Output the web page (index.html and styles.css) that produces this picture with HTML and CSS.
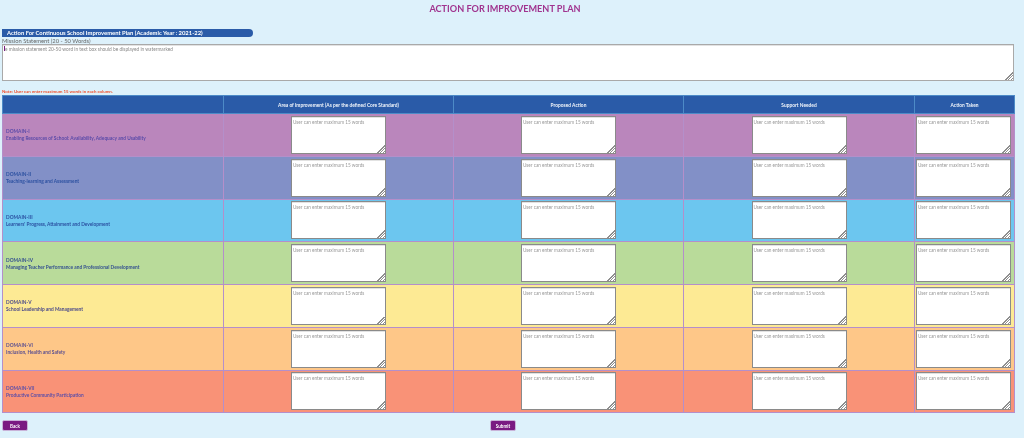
FILE: index.html
```html
<!DOCTYPE html>
<html lang="en">
<head>
<meta charset="utf-8">
<title>Action for Improvement Plan</title>
<link rel="stylesheet" href="styles.css">
</head>
<body>
<h1 class="title">ACTION FOR IMPROVEMENT PLAN</h1>
<div class="banner">Action For Continuous School Improvement Plan (Academic Year : 2021-22)</div>
<div class="mission-label">Mission Statement (20 - 50 Words)</div>
<textarea class="mission" placeholder="e mission statement 20-50 word in text box should be displayed in watermarked"></textarea>
<p class="note">Note: User can enter maximum 15 words in each column.</p>
<table class="plan">
<colgroup><col class="c1"><col class="c2"><col class="c3"><col class="c4"><col class="c5"></colgroup>
<thead><tr><th></th><th>Area of Improvement (As per the defined Core Standard)</th><th>Proposed Action</th><th>Support Needed</th><th>Action Taken</th></tr></thead>
<tbody>
<tr class="d1"><td class="domain">DOMAIN-I<br>Enabling Resources of School: Availability, Adequacy and Usability</td><td><textarea placeholder="User can enter maximum 15 words"></textarea></td><td><textarea placeholder="User can enter maximum 15 words"></textarea></td><td><textarea placeholder="User can enter maximum 15 words"></textarea></td><td><textarea placeholder="User can enter maximum 15 words"></textarea></td></tr>
<tr class="d2"><td class="domain">DOMAIN-II<br>Teaching-learning and Assessment</td><td><textarea placeholder="User can enter maximum 15 words"></textarea></td><td><textarea placeholder="User can enter maximum 15 words"></textarea></td><td><textarea placeholder="User can enter maximum 15 words"></textarea></td><td><textarea placeholder="User can enter maximum 15 words"></textarea></td></tr>
<tr class="d3"><td class="domain">DOMAIN-III<br>Learners' Progress, Attainment and Development</td><td><textarea placeholder="User can enter maximum 15 words"></textarea></td><td><textarea placeholder="User can enter maximum 15 words"></textarea></td><td><textarea placeholder="User can enter maximum 15 words"></textarea></td><td><textarea placeholder="User can enter maximum 15 words"></textarea></td></tr>
<tr class="d4"><td class="domain">DOMAIN-IV<br>Managing Teacher Performance and Professional Development</td><td><textarea placeholder="User can enter maximum 15 words"></textarea></td><td><textarea placeholder="User can enter maximum 15 words"></textarea></td><td><textarea placeholder="User can enter maximum 15 words"></textarea></td><td><textarea placeholder="User can enter maximum 15 words"></textarea></td></tr>
<tr class="d5"><td class="domain">DOMAIN-V<br>School Leadership and Management</td><td><textarea placeholder="User can enter maximum 15 words"></textarea></td><td><textarea placeholder="User can enter maximum 15 words"></textarea></td><td><textarea placeholder="User can enter maximum 15 words"></textarea></td><td><textarea placeholder="User can enter maximum 15 words"></textarea></td></tr>
<tr class="d6"><td class="domain">DOMAIN-VI<br>Inclusion, Health and Safety</td><td><textarea placeholder="User can enter maximum 15 words"></textarea></td><td><textarea placeholder="User can enter maximum 15 words"></textarea></td><td><textarea placeholder="User can enter maximum 15 words"></textarea></td><td><textarea placeholder="User can enter maximum 15 words"></textarea></td></tr>
<tr class="d7"><td class="domain">DOMAIN-VII<br>Productive Community Participation</td><td><textarea placeholder="User can enter maximum 15 words"></textarea></td><td><textarea placeholder="User can enter maximum 15 words"></textarea></td><td><textarea placeholder="User can enter maximum 15 words"></textarea></td><td><textarea placeholder="User can enter maximum 15 words"></textarea></td></tr>
</tbody>
</table>
<div class="actions">
<button class="btn back" type="button">Back</button>
<button class="btn submit" type="button">Submit</button>
</div>
</body>
</html>
```
FILE: styles.css
```css
* { box-sizing: border-box; }
html, body { margin: 0; height: 438px; overflow: hidden; }
body { background: #ddf1fb; font-family: Lato, "Open Sans", sans-serif; padding: 0 10px 0 2px; filter: blur(0.3px); }
.title { margin: 0; height: 29px; padding: 2px 6px 0 0; text-align: center; font-size: 9.15px; line-height: 14px; font-weight: 700; color: #a0348f; }
.banner { width: 251px; height: 7.5px; background: #2a5ba8; border-radius: 0 5px 5px 0; color: #fff; font-size: 5.85px; line-height: 7.5px; font-weight: 700; padding-left: 5px; white-space: nowrap; }
.mission-label { height: 7px; font-size: 5.8px; line-height: 7px; color: #666; white-space: nowrap; }
.mission { display: block; width: 1012px; height: 37.5px; padding: 1.5px 0 0 2px; background: linear-gradient(#7a1a82, #7a1a82) 1px 1.5px / 1px 5px no-repeat #fff; border: 1px solid #a9a9a9; border-top-width: 1.5px; border-left-width: 1.5px; border-radius: 0; box-shadow: inset 0 1px 0 #e2e2e2; font-family: inherit; font-size: 4.8px; line-height: 6px; outline: none; }
.mission::placeholder { color: #888; }
.note { margin: 6.5px 0 0; height: 7px; font-size: 4.4px; line-height: 7px; font-weight: 700; color: #f0502d; white-space: nowrap; }
.plan { width: 1012px; table-layout: fixed; border-collapse: collapse; margin-top: 0.5px; border: 1px solid #b48fca; }
.c1 { width: 221px; } .c2 { width: 230px; } .c3 { width: 230px; } .c4 { width: 231px; } .c5 { width: 100px; }
th { height: 18px; padding: 0; background: #2a5ba8; border: 1px solid #4d8bc7; color: #f2f6fb; font-size: 4.85px; font-weight: 700; text-align: center; white-space: nowrap; }
td { height: 42.75px; padding: 0; border: 1px solid #b48fca; text-align: center; vertical-align: middle; }
td textarea { display: block; width: 95px; height: 38px; margin: 0 auto; padding: 2px 0 0 1px; background: #fff; border: 1px solid #8a8a8a; border-top-width: 1.5px; border-radius: 0; box-shadow: inset 0 1px 0 #e2e2e2; font-family: inherit; font-size: 4.7px; line-height: 6px; outline: none; }
td:last-child textarea { margin-left: 1px; }
td textarea::placeholder { color: #999; }
textarea::-webkit-resizer { background: linear-gradient(135deg, transparent 0 50%, #8f8f8f 50% 57%, transparent 57% 68%, #8f8f8f 68% 75%, transparent 75% 86%, #8f8f8f 86% 93%, transparent 93%) right bottom / 8px 8px no-repeat; }
td.domain { padding: 1px 0 0 3px; text-align: left; font-size: 4.8px; line-height: 7px; font-weight: 700; color: #3a55a0; white-space: nowrap; }
.d1 td { background: #ba86bc; } .d1 .domain { color: #5a4aa8; }
.d2 td { background: #8290c7; } .d2 .domain { color: #2c50a0; }
.d3 td { background: #6cc6ef; } .d3 .domain { color: #2a4fa0; }
.d4 td { background: #b9db9a; } .d4 .domain { color: #34508f; }
.d5 td { background: #fdea94; } .d5 .domain { color: #4b4a8a; }
.d6 td { background: #fec788; } .d6 .domain { color: #5a4f90; }
.d7 td { background: #f99277; } .d7 .domain { color: #5b4ea8; }
.actions { display: flex; margin-top: 7px; }
.btn { height: 11px; width: 26px; padding: 0; border: 1px solid #c9b3d9; border-radius: 2px; background: #7a1a82; color: #fff; font-family: inherit; font-size: 4.6px; font-weight: 700; }
.submit { margin-left: 462px; }
```
